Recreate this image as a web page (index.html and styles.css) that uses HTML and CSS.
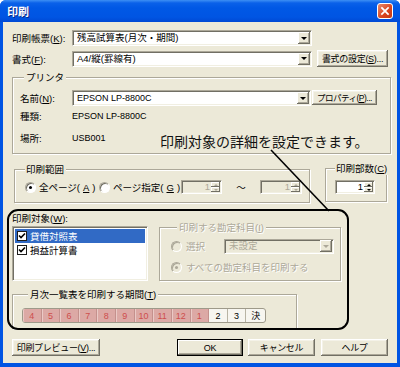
FILE: index.html
```html
<!DOCTYPE html>
<html>

<head>
	<title>印刷</title>
	<link rel="stylesheet" href="styles.css">
</head>

<body>
	<div class="window">
		<div class="titlebar">
			<span class="title">印刷</span>
			<span class="close-btn">
				<svg width="16" height="16" viewBox="0 0 16 16">
					<path d="M4.5 4.5 L11.5 11.5 M11.5 4.5 L4.5 11.5" stroke="#fff" stroke-width="2" stroke-linecap="square" />
				</svg>
			</span>
		</div>

		<div class="client">
			<div class="form-row row-report">
				<span class="label">印刷帳票(<u>K</u>):</span>
				<div class="combo combo-main">
					<span class="combo-text">残高試算表(月次・期間)</span>
					<span class="drop-btn"></span>
				</div>
			</div>

			<div class="form-row row-format">
				<span class="label">書式(<u>F</u>):</span>
				<div class="combo combo-main">
					<span class="combo-text">A4/縦(罫線有)</span>
					<span class="drop-btn"></span>
				</div>
				<button class="btn btn-format">書式の設定(<u>S</u>)...</button>
			</div>

			<div class="group printer-group">
				<div class="group-title">プリンタ</div>
				<div class="printer-row name-row">
					<span class="plabel">名前(<u>N</u>):</span>
					<div class="combo combo-printer">
						<span class="combo-text">EPSON LP-8800C</span>
						<span class="drop-btn"></span>
					</div>
					<button class="btn btn-prop">プロパティ(<u>P</u>)...</button>
				</div>
				<div class="printer-row type-row">
					<span class="plabel">種類:</span>
					<span class="pvalue">EPSON LP-8800C</span>
				</div>
				<div class="printer-row place-row">
					<span class="plabel">場所:</span>
					<span class="pvalue">USB001</span>
				</div>
			</div>

			<div class="range-row">
				<div class="group range-group">
					<div class="group-title tight">印刷範囲</div>
					<div class="range-line">
						<span class="radio-item item-all"><span class="radio checked"></span>全ページ(<u>A</u>)</span>
						<span class="radio-item item-pages"><span class="radio"></span>ページ指定(<u>G</u>)</span>
						<div class="spin spin-from disabled">
							<span class="spin-val">1</span>
							<span class="spin-btns"><span class="spin-up"></span><span class="spin-down"></span></span>
						</div>
						<span class="tilde">～</span>
						<div class="spin spin-to disabled">
							<span class="spin-val">1</span>
							<span class="spin-btns"><span class="spin-up"></span><span class="spin-down"></span></span>
						</div>
					</div>
				</div>
				<div class="group copies-group">
					<div class="group-title tight">印刷部数(<u>C</u>)</div>
					<div class="spin spin-copies">
						<span class="spin-val">1</span>
						<span class="spin-btns"><span class="spin-up"></span><span class="spin-down"></span></span>
					</div>
				</div>
			</div>

			<div class="target-label">印刷対象(<u>W</u>):</div>
			<div class="target-row">
				<div class="listbox">
					<div class="list-item selected"><span class="check"><svg width="8" height="8" viewBox="0 0 8 8"><path d="M1 3.5 L3 5.5 L7 1.5" fill="none" stroke="#000" stroke-width="1.6" /></svg></span>貸借対照表</div>
					<div class="list-item"><span class="check"><svg width="8" height="8" viewBox="0 0 8 8"><path d="M1 3.5 L3 5.5 L7 1.5" fill="none" stroke="#000" stroke-width="1.6" /></svg></span>損益計算書</div>
				</div>
				<div class="group account-group disabled-text">
					<div class="group-title account-title">印刷する勘定科目(<u>I</u>)</div>
					<div class="account-line line-select">
						<span class="radio disabled"></span>
						<span class="account-text">選択</span>
						<div class="combo combo-account disabled">
							<span class="combo-text">未設定</span>
							<span class="drop-btn"></span>
						</div>
					</div>
					<div class="account-line line-all">
						<span class="radio disabled checked"></span>
						<span class="account-text">すべての勘定科目を印刷する</span>
					</div>
				</div>
			</div>

			<div class="group month-group">
				<div class="group-title month-title">月次一覧表を印刷する期間(<u>T</u>)</div>
				<div class="month-bar">
					<span class="month on">4</span>
					<span class="month on">5</span>
					<span class="month on">6</span>
					<span class="month on">7</span>
					<span class="month on">8</span>
					<span class="month on">9</span>
					<span class="month on">10</span>
					<span class="month on">11</span>
					<span class="month on">12</span>
					<span class="month on">1</span>
					<span class="month">2</span>
					<span class="month">3</span>
					<span class="month">決</span>
				</div>
			</div>

			<div class="button-row">
				<button class="btn btn-preview">印刷プレビュー(<u>V</u>)...</button>
				<button class="btn btn-ok">OK</button>
				<button class="btn btn-cancel">キャンセル</button>
				<button class="btn btn-help">ヘルプ</button>
			</div>
		</div>

		<!-- annotation drawn over the dialog -->
		<div class="callout">印刷対象の詳細を設定できます。</div>
		<svg class="callout-line" width="400" height="367">
			<line x1="271" y1="150" x2="329" y2="211" stroke="#000" stroke-width="1.6" />
		</svg>
		<div class="callout-box"></div>
	</div>
</body>

</html>
```

FILE: styles.css
```css
body {
	margin: 0;
	font-family: "Liberation Sans", "Noto Sans CJK JP", sans-serif;
	font-size: 9.5px;
	color: #000;
	background: #fff;
}

u {
	text-decoration: underline;
	text-underline-offset: 1px;
}

.window {
	position: relative;
	width: 400px;
	height: 367px;
	box-sizing: border-box;
	padding: 0 3px 4px;
	background: #0054E3;
	display: flex;
	flex-direction: column;
	border-radius: 6px 6px 0 0;
	overflow: hidden;
}

.titlebar {
	height: 22px;
	flex-shrink: 0;
	margin: 0 -3px;
	padding: 0 5px 0 7px;
	display: flex;
	align-items: center;
	justify-content: space-between;
	background: linear-gradient(#3D8FF4 0, #0A61E9 3px, #0058E5 8px, #0055E3 17px, #0049D4 22px);
}

.title {
	color: #fff;
	font-family: "Noto Sans CJK JP", sans-serif;
	font-weight: bold;
	font-size: 11px;
	text-shadow: 1px 1px #0A2A8A;
}

.close-btn {
	width: 16px;
	height: 16px;
	box-sizing: border-box;
	border: 1px solid #fff;
	border-radius: 3px;
	background: linear-gradient(135deg, #E88A6C, #D9441E 60%, #C23A16);
	display: flex;
	align-items: center;
	justify-content: center;
	margin-top: -1px;
	margin-right: 2px;
}

.close-btn svg {
	width: 14px;
	height: 14px;
}

.client {
	flex: 1;
	background: #ECE9D8;
	display: flex;
	flex-direction: column;
	align-items: flex-start;
}

/* shared control looks */
.btn {
	font-family: inherit;
	font-size: 9px;
	letter-spacing: -0.3px;
	color: #000;
	padding: 0;
	border: none;
	height: 17px;
	background: #ECE9D8;
	box-shadow: inset -1px -1px #716F64, inset 1px 1px #fff, inset -2px -2px #ACA899, inset 2px 2px #F4F2E8;
	white-space: nowrap;
	overflow: hidden;
}

.combo {
	display: flex;
	align-items: center;
	box-sizing: border-box;
	height: 16px;
	padding: 1px;
	background: #fff;
	border: 1px solid;
	border-color: #ACA899 #fff #fff #ACA899;
	box-shadow: inset 1px 1px #716F64, inset -1px -1px #F1EFE2;
}

.combo-text {
	flex: 1;
	padding-left: 3px;
	line-height: 12px;
	white-space: nowrap;
	overflow: hidden;
}

.drop-btn {
	width: 12px;
	height: 12px;
	flex-shrink: 0;
	display: flex;
	align-items: center;
	justify-content: center;
	background: #ECE9D8;
	box-shadow: inset -1px -1px #716F64, inset 1px 1px #fff, inset -2px -2px #ACA899;
}

.drop-btn::after {
	content: "";
	border-left: 3px solid transparent;
	border-right: 3px solid transparent;
	border-top: 3px solid #000;
}

.combo.disabled {
	background: #ECE9D8;
	color: #ACA899;
}

.combo.disabled .drop-btn::after {
	border-top-color: #ACA899;
}

.group {
	box-sizing: border-box;
	border: 1px solid #ACA899;
	box-shadow: inset 1px 1px #fff, 1px 1px #fff;
}

.group-title {
	display: table;
	height: 13px;
	line-height: 13px;
	margin: -7px 0 0 4px;
	padding: 0 2px;
	background: #ECE9D8;
	white-space: nowrap;
}

.group-title.tight {
	margin-left: 0;
	padding-left: 1px;
}

.radio {
	width: 11px;
	height: 11px;
	box-sizing: border-box;
	flex-shrink: 0;
	border-radius: 50%;
	border: 1px solid;
	border-color: #ACA899 #fff #fff #ACA899;
	background: #fff;
	box-shadow: inset 1px 1px #716F64;
	display: inline-flex;
	align-items: center;
	justify-content: center;
}

.radio.checked::after {
	content: "";
	width: 3px;
	height: 3px;
	border-radius: 50%;
	background: #000;
}

.radio.disabled {
	background: #ECE9D8;
	box-shadow: inset 1px 1px #ACA899;
}

.radio.disabled.checked::after {
	background: #ACA899;
}

.spin {
	display: flex;
	align-items: center;
	box-sizing: border-box;
	height: 14px;
	padding: 1px;
	background: #fff;
	border: 1px solid;
	border-color: #ACA899 #fff #fff #ACA899;
	box-shadow: inset 1px 1px #716F64, inset -1px -1px #F1EFE2;
}

.spin-val {
	flex: 1;
	text-align: right;
	padding-right: 1px;
	line-height: 10px;
}

.spin-btns {
	width: 9px;
	height: 10px;
	display: flex;
	flex-direction: column;
}

.spin-up,
.spin-down {
	flex: 1;
	display: flex;
	align-items: center;
	justify-content: center;
	background: #ECE9D8;
	box-shadow: inset -1px -1px #716F64, inset 1px 1px #fff;
}

.spin-up::after {
	content: "";
	border-left: 2px solid transparent;
	border-right: 2px solid transparent;
	border-bottom: 2px solid #000;
}

.spin-down::after {
	content: "";
	border-left: 2px solid transparent;
	border-right: 2px solid transparent;
	border-top: 2px solid #000;
}

.spin.disabled {
	background: #ECE9D8;
	color: #ACA899;
}

.spin.disabled .spin-up::after {
	border-bottom-color: #ACA899;
}

.spin.disabled .spin-down::after {
	border-top-color: #ACA899;
}

/* top rows */
.form-row {
	display: flex;
	align-items: center;
	margin-left: 9px;
}

.row-report {
	margin-top: 8px;
	height: 16px;
}

.row-format {
	margin-top: 4px;
	height: 17px;
}

.label {
	width: 60px;
	flex-shrink: 0;
	white-space: nowrap;
}

.combo-main {
	width: 240px;
}

.btn-format {
	width: 71px;
	margin-left: 5px;
}

/* printer */
.printer-group {
	width: 379px;
	height: 77px;
	margin: 10px 0 0 9px;
	padding-left: 7px;
}

.printer-row {
	display: flex;
	align-items: center;
}

.name-row {
	margin-top: 6px;
	height: 16px;
}

.type-row {
	margin-top: 4px;
	height: 12px;
}

.place-row {
	margin-top: 10px;
	height: 12px;
}

.plabel {
	width: 52px;
	flex-shrink: 0;
	white-space: nowrap;
}

.pvalue {
	font-size: 9px;
}

.combo-printer {
	width: 239px;
}

.combo-printer .combo-text {
	font-size: 9px;
}

.btn-prop {
	width: 65px;
	height: 15px;
	margin-left: 1px;
	margin-top: -2px;
	font-size: 8.5px;
	letter-spacing: -0.5px;
}

/* range and copies */
.range-row {
	display: flex;
	margin-top: 15px;
}

.range-group {
	width: 296px;
	height: 34px;
	margin-left: 11px;
	padding-left: 10px;
}

.range-line {
	display: flex;
	align-items: center;
	height: 14px;
	margin-top: 4px;
}

.radio-item {
	display: flex;
	align-items: center;
	gap: 3px;
	white-space: nowrap;
}

.item-all {
	width: 74px;
}

.item-pages {
	width: 82px;
}

.spin-from {
	width: 41px;
}

.tilde {
	width: 38px;
	text-align: center;
}

.spin-to {
	width: 42px;
}

.copies-group {
	width: 62px;
	height: 34px;
	margin-left: 15px;
	margin-top: -1px;
	padding-left: 9px;
}

.spin-copies {
	width: 40px;
	margin-top: 5px;
}

/* print target area */
.target-label {
	margin: 10px 0 0 9px;
	height: 12px;
	line-height: 12px;
}

.target-row {
	display: flex;
	margin: 1px 0 0 9px;
}

.listbox {
	width: 136px;
	height: 55px;
	box-sizing: border-box;
	padding: 2px;
	background: #fff;
	border: 1px solid;
	border-color: #ACA899 #fff #fff #ACA899;
	box-shadow: inset 1px 1px #716F64, inset -1px -1px #F1EFE2;
}

.list-item {
	height: 14px;
	display: flex;
	align-items: center;
	padding-left: 2px;
	gap: 3px;
	white-space: nowrap;
}

.list-item.selected {
	background: #316AC5;
	color: #fff;
}

.check {
	width: 10px;
	height: 10px;
	box-sizing: border-box;
	border: 1px solid #1C1C1C;
	background: #fff;
	display: flex;
	align-items: center;
	justify-content: center;
}

.account-group {
	width: 182px;
	height: 54px;
	margin: 1px 0 0 11px;
	padding-left: 11px;
}

.disabled-text {
	color: #ACA899;
	text-shadow: 1px 1px #fff;
}

.account-title {
	margin-left: 6px;
}

.account-line {
	display: flex;
	align-items: center;
	height: 14px;
	white-space: nowrap;
}

.line-select {
	margin-top: 5px;
}

.line-all {
	margin-top: 7px;
}

.account-text {
	margin-left: 4px;
}

.combo-account {
	width: 110px;
	height: 15px;
	margin-left: 19px;
	text-shadow: none;
}

/* month range */
.month-group {
	width: 285px;
	height: 35px;
	margin: 13px 0 0 9px;
	padding-left: 9px;
}

.month-title {
	margin-left: 6px;
}

.month-bar {
	display: grid;
	grid-template-columns: repeat(13, 1fr);
	width: 244px;
	height: 15px;
	margin-top: 7px;
	box-sizing: border-box;
	border: 1px solid #9E9A8A;
	border-radius: 3px;
	overflow: hidden;
	background: #F7F6F0;
}

.month {
	display: flex;
	align-items: center;
	justify-content: center;
	border-right: 1px solid #B8B4A4;
	font-size: 9px;
}

.month:last-child {
	border-right: none;
}

.month.on {
	background: #DCA9A5;
	color: #CE4E4C;
	border-right-color: #C4918D;
	box-shadow: inset 1px 0 #EBCAC6;
}

/* bottom buttons */
.button-row {
	display: flex;
	margin: 10px 0 0 9px;
}

.btn-preview {
	width: 88px;
}

.btn-ok {
	width: 66px;
	margin-left: 77px;
	box-shadow: inset 0 0 0 1px #000, inset -2px -2px #716F64, inset 2px 2px #fff, inset -3px -3px #ACA899;
}

.btn-cancel {
	width: 67px;
	margin-left: 5px;
}

.btn-help {
	width: 67px;
	margin-left: 6px;
}

/* annotation overlay */
.callout {
	position: absolute;
	left: 160px;
	top: 133px;
	font-family: "Noto Sans CJK JP", sans-serif;
	font-size: 14px;
	line-height: 16px;
	color: #111;
	white-space: nowrap;
}

.callout-line {
	position: absolute;
	left: 0;
	top: 0;
	pointer-events: none;
}

.callout-box {
	position: absolute;
	left: 7px;
	top: 209px;
	width: 342px;
	height: 121px;
	box-sizing: border-box;
	border: 2px solid #000;
	border-radius: 11px;
	pointer-events: none;
}
```
